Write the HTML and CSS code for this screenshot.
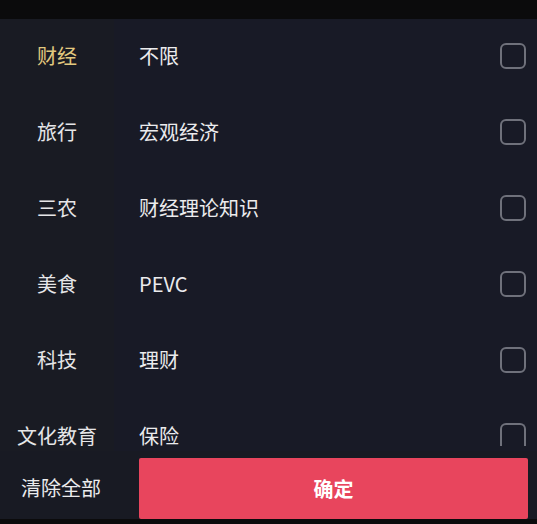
FILE: index.html
```html
<!DOCTYPE html>
<html lang="zh">

<head>
    <meta charset="UTF-8">
    <meta name="viewport" content="width=device-width, initial-scale=1.0">
    <title>分类筛选</title>
    <link rel="stylesheet" href="styles.css">
</head>

<body>
    <div class="top-bar"></div>
    <div class="main">
        <ul class="cats">
            <li class="cat active">财经</li>
            <li class="cat">旅行</li>
            <li class="cat">三农</li>
            <li class="cat">美食</li>
            <li class="cat">科技</li>
            <li class="cat">文化教育</li>
        </ul>
        <ul class="options">
            <li class="option"><span class="label">不限</span><span class="check"></span></li>
            <li class="option"><span class="label">宏观经济</span><span class="check"></span></li>
            <li class="option"><span class="label">财经理论知识</span><span class="check"></span></li>
            <li class="option"><span class="label">PEVC</span><span class="check"></span></li>
            <li class="option"><span class="label">理财</span><span class="check"></span></li>
            <li class="option"><span class="label">保险</span><span class="check cut"></span></li>
        </ul>
    </div>
    <div class="footer">
        <button class="clear-btn">清除全部</button>
        <button class="ok-btn">确定</button>
    </div>
    <div class="bottom-bar"></div>
</body>

</html>
```

FILE: styles.css
```css
* {
    margin: 0;
    padding: 0;
    box-sizing: border-box;
}

body {
    width: 537px;
    height: 524px;
    overflow: hidden;
    background-color: #181a23;
    font-family: "Noto Sans CJK SC", "Noto Sans", sans-serif;
    display: flex;
    flex-direction: column;
}

.top-bar {
    height: 19px;
    background-color: #0b0b0c;
}

.main {
    height: 432px;
    display: flex;
    overflow: hidden;
}

.cats {
    list-style: none;
    width: 114px;
    background-color: #191b23;
}

.cat {
    height: 76px;
    padding-top: 27px;
    text-align: center;
    font-size: 20px;
    line-height: 20px;
    color: #e6e6e8;
}

.cat.active {
    color: #e2c97f;
}

.options {
    list-style: none;
    flex: 1;
    background-color: #181a26;
}

.option {
    height: 76px;
    display: flex;
    align-items: flex-start;
    justify-content: space-between;
    padding-left: 25px;
    padding-right: 11px;
    font-size: 20px;
    line-height: 20px;
    color: #ebebed;
}

.cat:last-child,
.option:last-child {
    height: 52px;
}

.label {
    margin-top: 27px;
}

.check {
    margin-top: 24px;
    width: 26px;
    height: 26px;
    border: 2px solid #6f717b;
    border-radius: 6px;
}

.check.cut {
    height: 23px;
    border-bottom: none;
    border-radius: 6px 6px 0 0;
}

.footer {
    height: 68px;
    padding-top: 7px;
    display: flex;
    background-color: #181a23;
}

.clear-btn {
    width: 139px;
    padding-left: 21px;
    padding-bottom: 2px;
    text-align: left;
    background: none;
    border: none;
    font-family: inherit;
    font-size: 20px;
    color: #ebebed;
}

.ok-btn {
    width: 389px;
    background-color: #e8455d;
    border: none;
    border-radius: 2px;
    font-family: inherit;
    font-size: 20px;
    font-weight: 700;
    color: #ffffff;
}

.bottom-bar {
    height: 5px;
    background-color: #0b0b0c;
}
```
